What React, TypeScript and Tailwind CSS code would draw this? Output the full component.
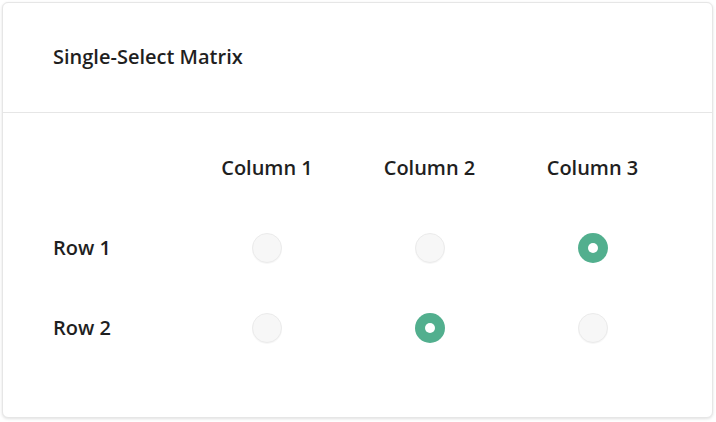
import React, { useState } from "react";

const cols = ["Column 1", "Column 2", "Column 3"];
const rows = ["Row 1", "Row 2"];

export default function App() {
  const [sel, setSel] = useState<Record<number, number>>({ 0: 2, 1: 1 });
  return (
    <div className="w-[716px] h-[422px] bg-white p-[2px]" style={{ fontFamily: '"Open Sans", "Noto Sans", sans-serif' }}>
      <div className="w-[711px] h-[416px] rounded-[6px] border border-[#e6e6e6] bg-white shadow-[0_1px_3px_rgba(0,0,0,0.12)] flex flex-col text-[#1f1f1f]">
        <div className="h-[110px] border-b border-[#e6e6e6] flex items-center pl-[50px] pb-[2px]">
          <span className="text-[20px] font-semibold">Single-Select Matrix</span>
        </div>
        <div className="pl-[50px] pt-[15px]">
          <div className="grid grid-cols-[133px_162px_163px_163px]">
            <div className="h-[80px]" />
            {cols.map((c) => (
              <div key={c} className="h-[80px] flex items-center justify-center text-[20px] font-semibold">
                {c}
              </div>
            ))}
            {rows.map((r, ri) => (
              <React.Fragment key={r}>
                <div className="h-[80px] flex items-center text-[20px] font-semibold">{r}</div>
                {cols.map((c, ci) => {
                  const on = sel[ri] === ci;
                  return (
                    <div key={c} className="h-[80px] flex items-center justify-center">
                      <button
                        onClick={() => setSel({ ...sel, [ri]: ci })}
                        className={
                          on
                            ? "w-[30px] h-[30px] rounded-full bg-[#52af8e] flex items-center justify-center"
                            : "w-[30px] h-[30px] rounded-full bg-[#f7f7f7] border border-[#ebebeb] shadow-[0_1px_1px_rgba(0,0,0,0.04)]"
                        }
                      >
                        {on && <span className="w-[10px] h-[10px] rounded-full bg-white block" />}
                      </button>
                    </div>
                  );
                })}
              </React.Fragment>
            ))}
          </div>
        </div>
      </div>
    </div>
  );
}
